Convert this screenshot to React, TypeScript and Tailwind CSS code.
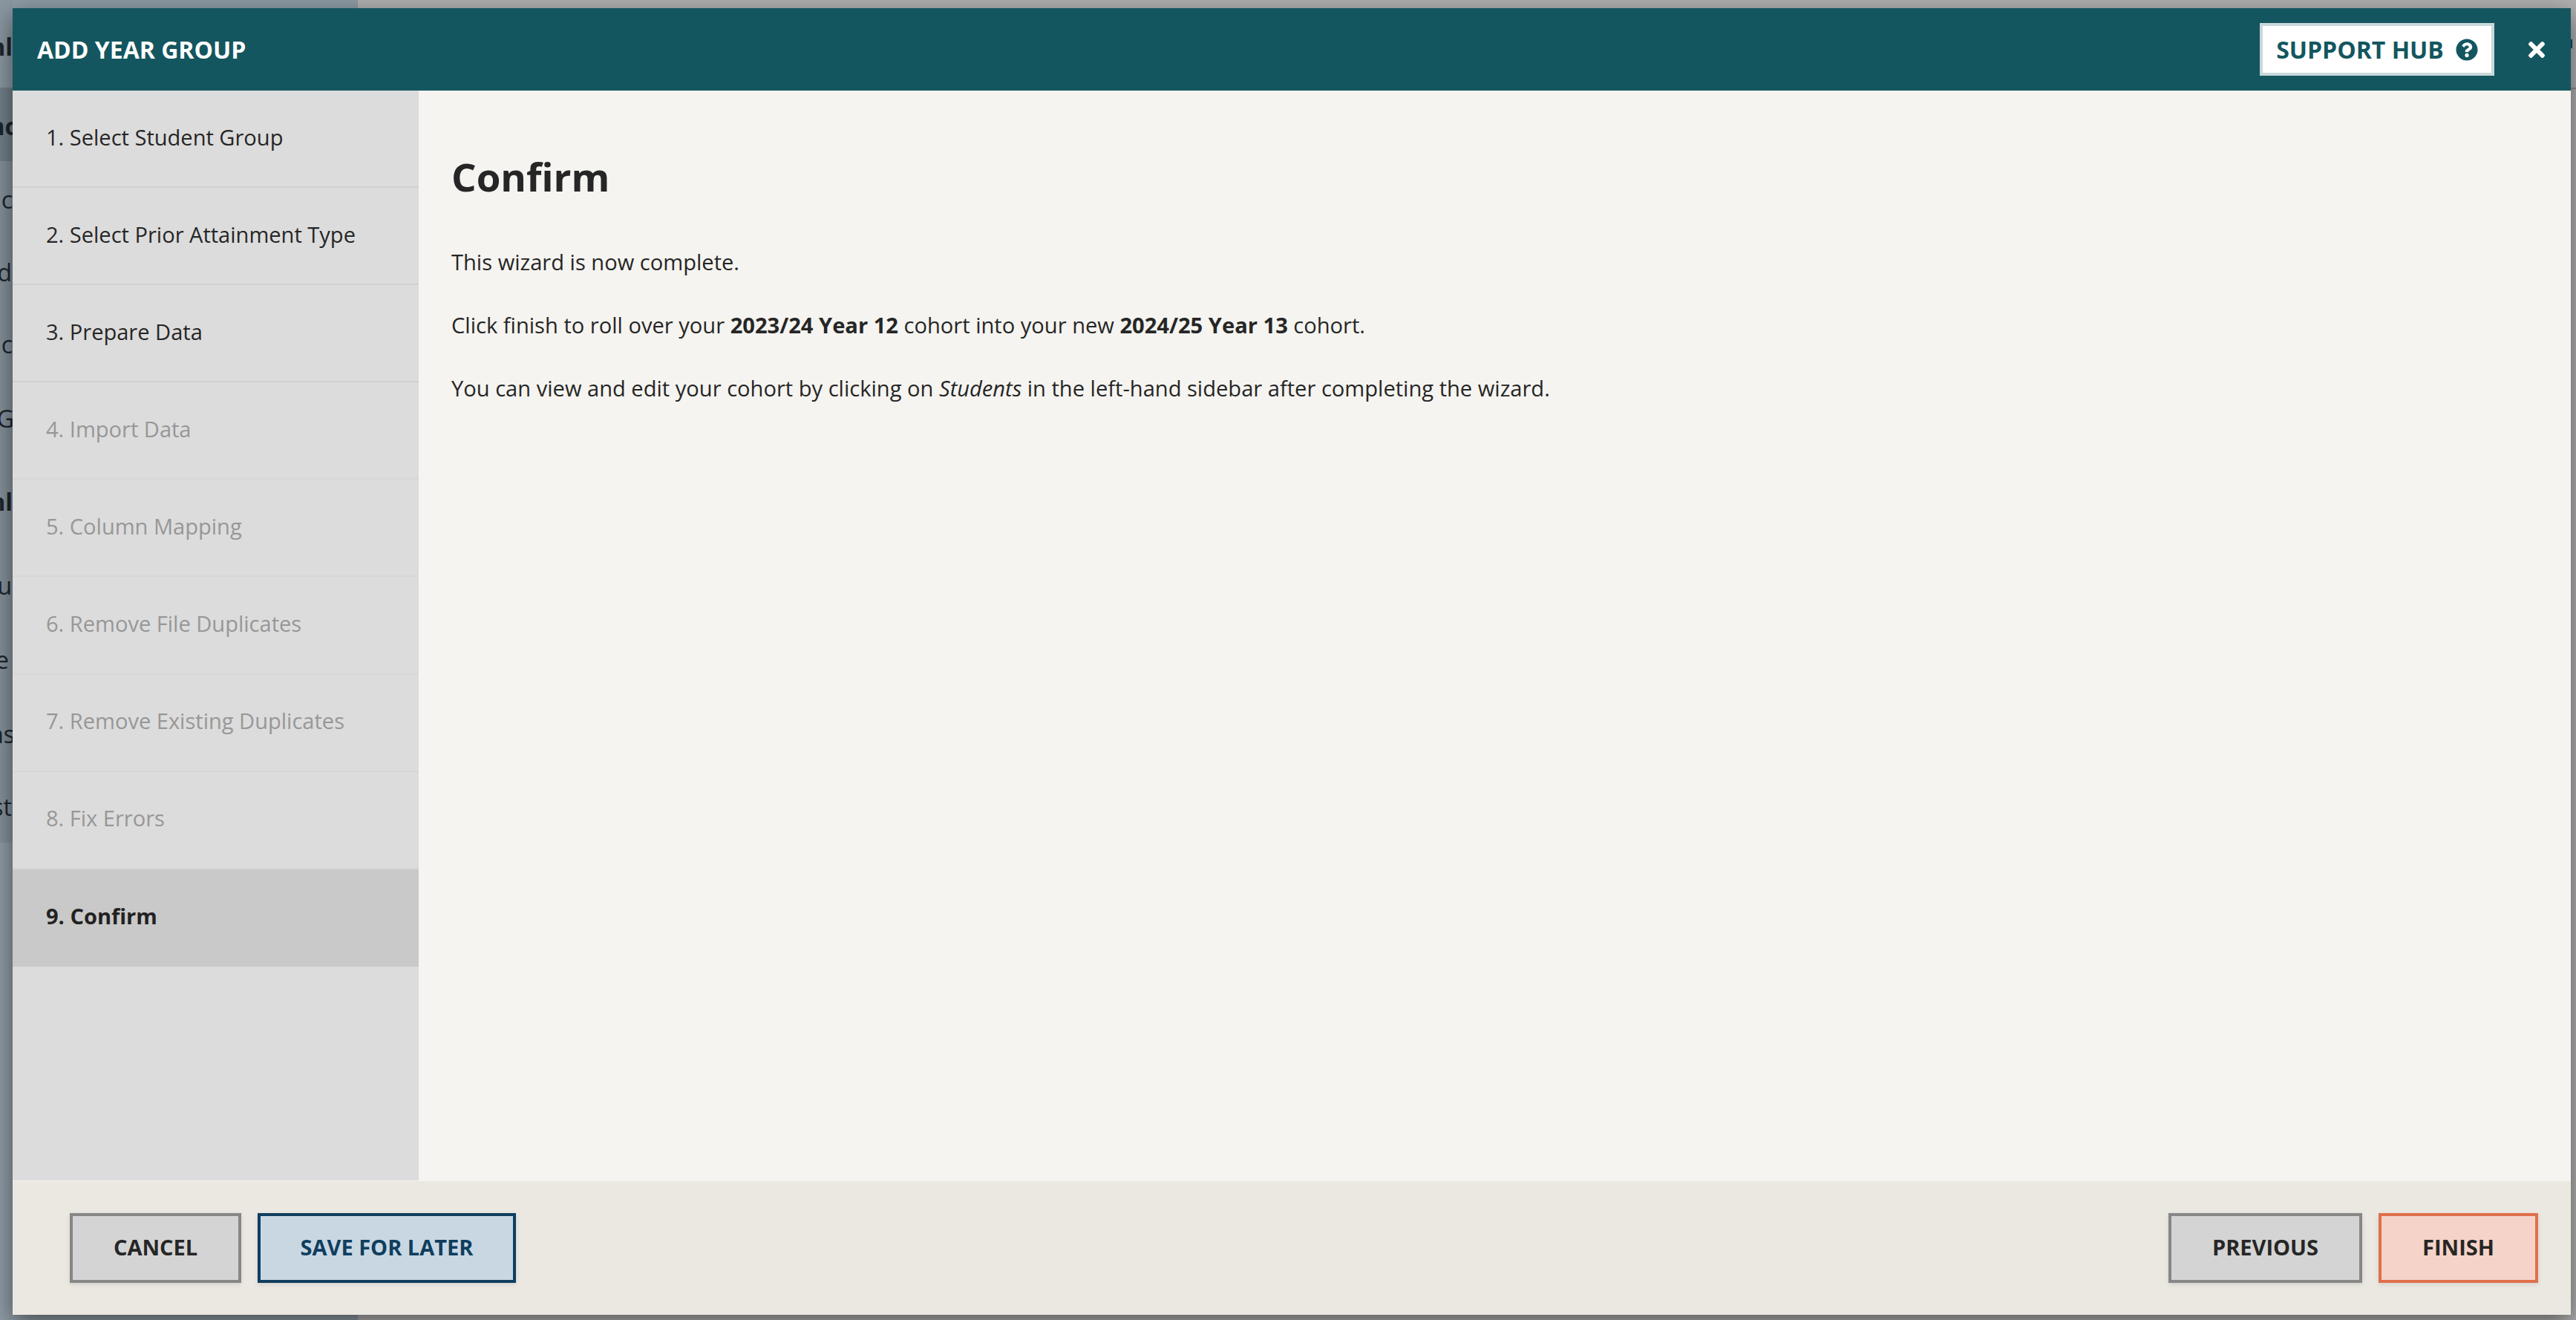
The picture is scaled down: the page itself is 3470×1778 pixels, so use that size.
import { FaQuestionCircle, FaTimes } from "react-icons/fa";

const font = "font-['Open_Sans',sans-serif]";

const behind = [
  { t: "nl", c: "h-[118px] pt-[43px] font-bold bg-[#8a97a1]", s: "" },
  { t: "nc", c: "h-[99px] pt-[32px] font-bold bg-[#727f89]", s: "-mr-[6px]" },
  { t: "ac", c: "h-[100px] pt-[32px] bg-[#84909a]", s: "" },
  { t: "d", c: "h-[97px] pt-[30px] bg-[#84909a]", s: "mr-[1px]" },
  { t: "ac", c: "h-[100px] pt-[30px] bg-[#84909a]", s: "" },
  { t: "G", c: "h-[97px] pt-[30px] bg-[#84909a]", s: "-mr-[2px]" },
  { t: "nl", c: "h-[115px] pt-[45px] font-bold bg-[#84909a]", s: "" },
  { t: "u", c: "h-[113px] pt-[43px] bg-[#84909a]", s: "mr-[1px]" },
  { t: "e", c: "h-[98px] pt-[30px] bg-[#84909a]", s: "mr-[5px]" },
  { t: "ns", c: "h-[100px] pt-[32px] bg-[#84909a]", s: "-mr-[3px]" },
  { t: "st", c: "h-[98px] pt-[30px] bg-[#84909a]", s: "mr-[1px]" },
];

const steps = [
  { t: "1. Select Student Group", c: "text-[#262626] border-[#d0d0d0]" },
  { t: "2. Select Prior Attainment Type", c: "text-[#262626] border-[#d0d0d0]" },
  { t: "3. Prepare Data", c: "text-[#262626] border-[#d0d0d0]" },
  { t: "4. Import Data", c: "text-[#979797] border-[#d6d6d6]" },
  { t: "5. Column Mapping", c: "text-[#979797] border-[#d6d6d6]" },
  { t: "6. Remove File Duplicates", c: "text-[#979797] border-[#d6d6d6]" },
  { t: "7. Remove Existing Duplicates", c: "text-[#979797] border-[#d6d6d6]" },
  { t: "8. Fix Errors", c: "text-[#979797] border-[#d6d6d6]" },
  { t: "9. Confirm", c: "text-[#222222] font-bold bg-[#c9c9c9] border-[#c9c9c9]" },
];

function Btn({ label, c }: { label: string; c: string }) {
  return (
    <button className={`h-[94px] border-4 text-[29px] font-bold flex items-center justify-center pb-[2px] shadow-[0_2px_6px_rgba(0,0,0,0.1)] ${c}`}>
      {label}
    </button>
  );
}

export default function App() {
  return (
    <div className={`relative w-[3470px] h-[1778px] overflow-hidden flex bg-[#b0b0b0] ${font}`}>
      <aside className="w-[482px] h-full flex flex-col bg-[#8e9ba5]">
        <div className="flex flex-col w-[17px] text-[32px] leading-[40px] text-[#1d252b] overflow-hidden">
          {behind.map((b, i) => (
            <div key={i} className={`w-full flex justify-end whitespace-nowrap ${b.c}`}>
              <span className={b.s}>{b.t}</span>
            </div>
          ))}
        </div>
      </aside>
      <div className="flex-1 h-[120px] border-b-2 border-[#8a8a8a] flex justify-end items-center pr-[5px]">
        <div className="w-[2px] h-[12px] bg-[#1a3e66]" />
      </div>

      <div className="absolute left-[17px] top-[11px] w-[3446px] h-[1760px] flex flex-col shadow-[0_10px_30px_rgba(0,0,0,0.5)]">
        <header className="h-[111px] shrink-0 bg-[#14565f] flex items-center pl-[33px] pr-[30px] text-white">
          <h1 className="text-[32px] font-bold">ADD YEAR GROUP</h1>
          <div className="ml-auto flex items-center gap-[41px]">
            <button className="w-[316px] h-[71px] bg-white border-4 border-[#c8d8da] text-[#14565f] text-[32px] font-bold flex items-center justify-center gap-[16px]">
              SUPPORT HUB
              <FaQuestionCircle className="w-[30px] h-[30px]" />
            </button>
            <FaTimes className="w-[32px] h-[32px] text-white" />
          </div>
        </header>

        <div className="flex-1 flex min-h-0">
          <nav className="w-[547px] shrink-0 bg-[#dcdcdc]">
            {steps.map((s) => (
              <div key={s.t} className={`h-[131.1px] border-b-2 flex items-center pl-[45px] pb-[2px] text-[29.05px] ${s.c}`}>
                {s.t}
              </div>
            ))}
          </nav>
          <main className="flex-1 bg-[#f5f4f0] pl-[44px] text-[#262626] text-[29.1px]">
            <h2 className="text-[52.8px] leading-[70px] font-bold mt-[81px] mb-[60px]">Confirm</h2>
            <p className="leading-[40px] mb-[45px]">This wizard is now complete.</p>
            <p className="leading-[40px] mb-[45px]">
              Click finish to roll over your <b>2023/24 Year 12</b> cohort into your new <b>2024/25 Year 13</b> cohort.
            </p>
            <p className="leading-[40px]">
              You can view and edit your cohort by clicking on <i>Students</i> in the left-hand sidebar after completing the wizard.
            </p>
          </main>
        </div>

        <footer className="h-[181px] shrink-0 bg-[#ebe8e1] border-t border-[#f5f4f0] flex items-center pl-[77px] pr-[44px] gap-[22px]">
          <Btn label="CANCEL" c="w-[231px] bg-[#d4d4d4] border-[#878787] text-[#262626]" />
          <Btn label="SAVE FOR LATER" c="w-[348px] bg-[#c9d7e3] border-[#0f3e5e] text-[#0f3e5e]" />
          <div className="ml-auto flex gap-[22px]">
            <Btn label="PREVIOUS" c="w-[261px] bg-[#d4d4d4] border-[#878787] text-[#262626]" />
            <Btn label="FINISH" c="w-[215px] bg-[#f5d3c8] border-[#e0704a] text-[#262626]" />
          </div>
        </footer>
      </div>
    </div>
  );
}
